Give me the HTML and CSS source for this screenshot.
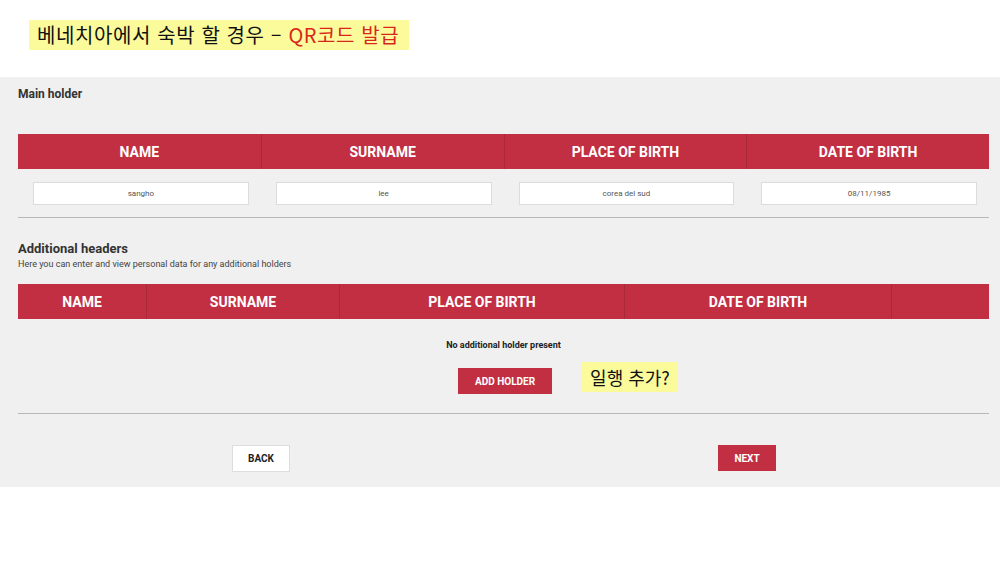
FILE: index.html
```html
<!DOCTYPE html>
<html lang="ko">
<head>
    <meta charset="UTF-8">
    <meta name="viewport" content="width=device-width, initial-scale=1.0">
    <title>Holders</title>
    <link rel="stylesheet" href="styles.css">
</head>
<body>
    <div class="top">
        <span class="note note-title">베네치아에서 숙박 할 경우 – <span class="red">QR코드 발급</span></span>
    </div>

    <div class="panel">
        <h2 class="label">Main holder</h2>
        <div class="thead cols-main">
            <div>NAME</div>
            <div>SURNAME</div>
            <div>PLACE OF BIRTH</div>
            <div>DATE OF BIRTH</div>
        </div>
        <div class="inputs">
            <div class="cell"><input type="text" value="sangho"></div>
            <div class="cell"><input type="text" value="lee"></div>
            <div class="cell"><input type="text" value="corea del sud"></div>
            <div class="cell"><input type="text" value="08/11/1985"></div>
        </div>
        <hr>

        <h2 class="label label-add">Additional headers</h2>
        <p class="sub">Here you can enter and view personal data for any additional holders</p>
        <div class="thead cols-add">
            <div>NAME</div>
            <div>SURNAME</div>
            <div>PLACE OF BIRTH</div>
            <div>DATE OF BIRTH</div>
            <div></div>
        </div>
        <p class="empty">No additional holder present</p>
        <div class="add-row">
            <button class="btn btn-red">ADD HOLDER</button>
            <span class="note note-add">일행 추가?</span>
        </div>
        <hr class="hr-bottom">

        <div class="nav">
            <button class="btn btn-white">BACK</button>
            <button class="btn btn-red">NEXT</button>
        </div>
    </div>
</body>
</html>
```

FILE: styles.css
```css
body {
    margin: 0;
    background: #fff;
    font-family: Roboto, "Liberation Sans", sans-serif;
    color: #333;
}
.top {
    height: 77px;
    padding: 20px 0 0 29px;
    box-sizing: border-box;
}
.note {
    display: inline-block;
    background: #fbfb9c;
    color: #111;
    font-family: "Noto Sans CJK KR", sans-serif;
}
.note-title {
    height: 30px;
    line-height: 30px;
    padding: 0 10px 0 8px;
    font-size: 20px;
    letter-spacing: 0.6px;
}
.red {
    color: #d8261c;
}
.panel {
    background: #f0f0f0;
    padding: 9px 11px 15px 18px;
}
.label {
    margin: 0;
    font-size: 12px;
    font-weight: 700;
    line-height: 16px;
    color: #333;
}
.thead {
    display: grid;
    background: #c22f43;
    color: #fff;
    height: 35px;
    font-size: 14px;
    font-weight: 700;
}
.thead div {
    display: flex;
    align-items: center;
    justify-content: center;
    border-left: 1px solid #a9283a;
}
.thead div:first-child {
    border-left: none;
}
.cols-main {
    grid-template-columns: repeat(4, 1fr);
    margin-top: 32px;
}
.cols-add {
    grid-template-columns: 128px 193px 285px 267px 1fr;
    margin-top: 13px;
}
.inputs {
    display: grid;
    grid-template-columns: repeat(4, 1fr);
    margin-top: 13px;
}
.cell {
    padding: 0 12px 0 15px;
}
.cell input {
    display: block;
    width: 100%;
    box-sizing: border-box;
    height: 23px;
    border: 1px solid #dcdcdc;
    background: #fff;
    text-align: center;
    font-family: Roboto, sans-serif;
    font-size: 8px;
    color: #555;
}
hr {
    border: none;
    border-top: 1px solid #b8b8b8;
    margin: 12px 0 0;
}
.hr-bottom {
    margin-top: 18px;
}
.label-add {
    margin-top: 23px;
    font-size: 13px;
}
.sub {
    margin: 0;
    font-size: 9px;
    line-height: 14px;
    color: #444;
}
.empty {
    margin: 20px 0 0;
    text-align: center;
    font-size: 9px;
    font-weight: 700;
    line-height: 12px;
    color: #222;
}
.add-row {
    display: flex;
    justify-content: center;
    align-items: flex-start;
    margin-top: 11px;
    padding-left: 128px;
    height: 33px;
}
.add-row .btn {
    margin-top: 6px;
    width: 94px;
    height: 26px;
}
.note-add {
    margin-left: 30px;
    height: 30px;
    line-height: 30px;
    padding: 0 7px 0 8px;
    font-size: 18px;
}
.btn {
    border: none;
    font-family: Roboto, sans-serif;
    font-size: 10px;
    font-weight: 700;
    padding: 0;
    cursor: pointer;
}
.btn-red {
    background: #c22f43;
    color: #fff;
}
.btn-white {
    background: #fff;
    color: #222;
    border: 1px solid #ddd;
}
.nav {
    display: flex;
    margin-top: 31px;
    height: 27px;
}
.nav .btn {
    width: 58px;
    height: 27px;
}
.nav .btn-white {
    margin-left: 214px;
}
.nav .btn-red {
    margin-left: 428px;
    height: 26px;
}
```
